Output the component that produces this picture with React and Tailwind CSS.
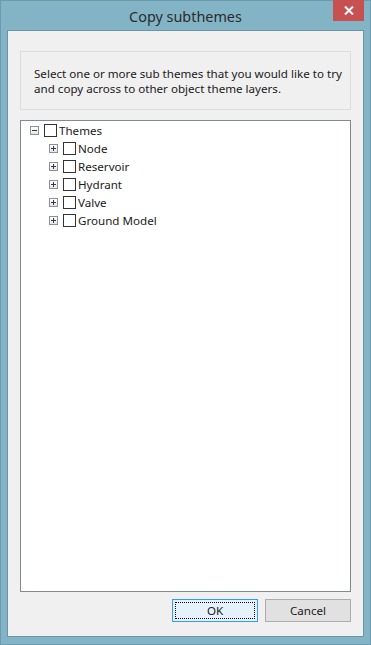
export default function App() {
    const children = ['Node', 'Reservoir', 'Hydrant', 'Valve', 'Ground Model'];

    return (
        <div
            className="w-[371px] h-[645px] bg-[#83b4c6] border border-[#6b9bb0] flex flex-col"
            style={{ fontFamily: '"Noto Sans", "Open Sans", sans-serif' }}
        >
            {/* Title bar */}
            <div className="relative h-[29px] flex items-center justify-center">
                <span className="text-[14.4px] text-[#2b2b2b] mt-[3px]">Copy subthemes</span>
                <div className="absolute right-[6px] top-[-1px] w-[31px] h-[21px] bg-[#c75050] flex items-center justify-center">
                    <svg width="10" height="9" viewBox="0 0 10 9">
                        <path d="M1 0.5 L9 8.5 M9 0.5 L1 8.5" stroke="#fff" strokeWidth="2" />
                    </svg>
                </div>
            </div>

            {/* Client area */}
            <div className="flex-1 mx-[6px] mb-[7px] border border-[#6f93a6] bg-[#f0f0f0] flex flex-col px-[12px] pt-[20px] pb-[14px]">
                {/* Info panel */}
                <div className="h-[59px] border border-[#dcdcdc] flex flex-col justify-center pl-[13px] text-[11.6px] leading-[15px] text-[#1a1a1a] whitespace-nowrap">
                    <div>Select one or more sub themes that you would like to try</div>
                    <div>and copy across to other object theme layers.</div>
                </div>

                {/* Tree */}
                <div className="mt-[10px] flex-1 bg-white border border-[#828790] text-[11.6px] text-[#1a1a1a]">
                    <TreeRow label="Themes" expanded indent={9} />
                    {children.map((c) => (
                        <TreeRow key={c} label={c} indent={28} />
                    ))}
                </div>

                {/* Buttons */}
                <div className="mt-[7px] flex justify-end gap-[7px]">
                    <button className="w-[86px] h-[23px] border border-[#3399ff] bg-[#e5f1fb] p-[2px] text-[11.6px] text-[#1a1a1a]">
                        <div className="w-full h-full border border-dotted border-black flex items-center justify-center">OK</div>
                    </button>
                    <button className="w-[86px] h-[23px] border border-[#adadad] bg-[#e1e1e1] text-[11.6px] text-[#1a1a1a] flex items-center justify-center">
                        Cancel
                    </button>
                </div>
            </div>
        </div>
    );
}

function TreeRow({ label, expanded, indent }) {
    return (
        <div className="h-[18px] flex items-center" style={{ paddingLeft: indent }}>
            <div className="w-[9px] h-[9px] border border-[#919191] bg-gradient-to-b from-white to-[#e6e6e6] flex items-center justify-center">
                <svg width="7" height="7" viewBox="0 0 7 7">
                    <path d="M1 3.5 H6" stroke="#2a3b5a" strokeWidth="1" />
                    {!expanded && <path d="M3.5 1 V6" stroke="#2a3b5a" strokeWidth="1" />}
                </svg>
            </div>
            <div className="ml-[5px] w-[13px] h-[13px] border border-[#333] bg-white" />
            <span className="ml-[2px] leading-[15px]">{label}</span>
        </div>
    );
}
